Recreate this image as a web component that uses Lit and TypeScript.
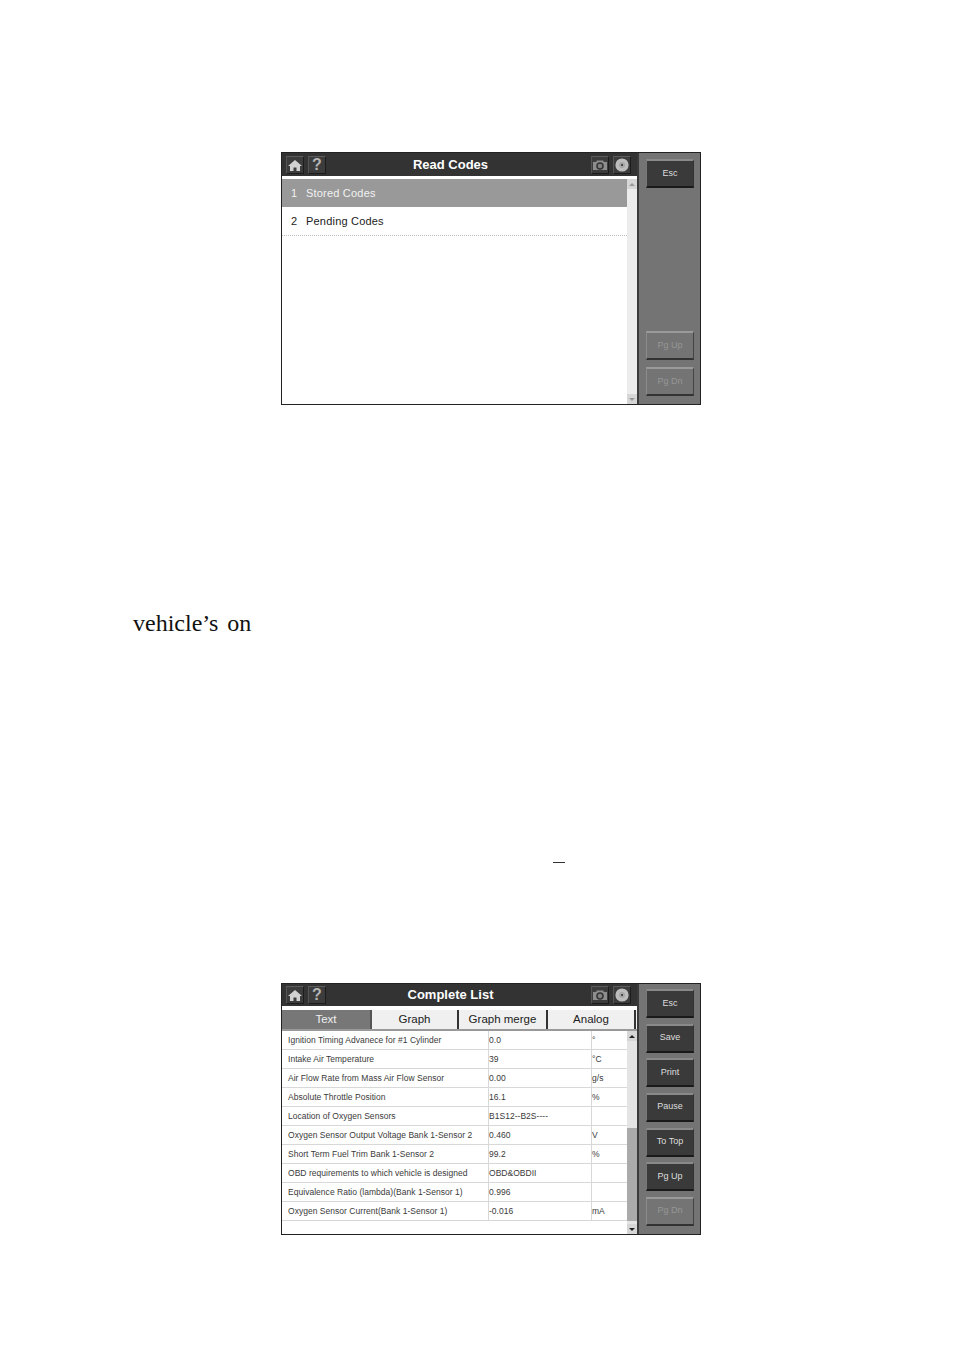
import { LitElement, html, css, svg } from "lit";
import { customElement, property } from "lit/decorators.js";

const home = svg`<svg viewBox="0 0 18 18" width="18" height="18"><path d="M9 4 L16 10 L14 10 L14 15 L10.5 15 L10.5 11.5 L7.5 11.5 L7.5 15 L4 15 L4 10 L2 10 Z" fill="#d2d2d2"/></svg>`;
const cam = svg`<svg viewBox="0 0 18 18" width="18" height="18"><path d="M2 6 H5 L6 4.5 H12 L13 6 H16 V14 H2 Z" fill="#8d8d8d"/><circle cx="9" cy="10" r="3.8" fill="#333"/><circle cx="9" cy="10" r="2.3" fill="#808080"/></svg>`;
const disc = svg`<svg viewBox="0 0 18 18" width="18" height="18"><circle cx="9" cy="9" r="6.6" fill="#bdbdbd"/><circle cx="9" cy="9" r="3" fill="#a6a6a6"/><circle cx="9" cy="9" r="1" fill="#2e2e2e"/></svg>`;

@customElement("hu-head")
class HuHead extends LitElement {
  @property() label = "";
  static styles = css`
    :host { display: flex; align-items: center; height: 23px; background: #333; box-sizing: border-box; padding: 0 6px 0 4px; font-family: "Liberation Sans", Arial, sans-serif; }
    .ic { width: 18px; height: 18px; box-sizing: border-box; background: #3c3c3c; border: 1px solid #1c1c1c; border-top-color: #5c5c5c; border-left-color: #555; display: flex; align-items: center; justify-content: center; color: #b4b4b4; font-size: 16px; font-weight: bold; line-height: 1; }
    .ic svg { display: block; margin: -1px; }
    .pair { display: flex; gap: 4px; }
    .t { flex: 1; text-align: center; color: #fff; font-size: 13px; font-weight: bold; padding-right: 16px; padding-bottom: 1px; }
  `;
  render() {
    return html`<div class="pair"><div class="ic">${home}</div><div class="ic">?</div></div>
      <div class="t">${this.label}</div>
      <div class="pair"><div class="ic">${cam}</div><div class="ic">${disc}</div></div>`;
  }
}

@customElement("hu-btn")
class HuBtn extends LitElement {
  @property() label = "";
  @property({ type: Boolean }) off = false;
  static styles = css`
    :host { display: block; }
    div { width: 48px; height: 29px; box-sizing: border-box; padding-bottom: 2px; display: flex; align-items: center; justify-content: center; background: #3a3a3a; color: #ddd; font-family: "Liberation Sans", Arial, sans-serif; font-size: 9px; border: 1px solid #1e1e1e; border-top: 2px solid #8a8a8a; border-left-color: #777; border-right-color: #333; border-bottom: 2px solid #1a1a1a; }
    .off { background: #747474; color: #969696; border-top-color: #9a9a9a; border-left-color: #8c8c8c; border-right-color: #444; border-bottom-color: #333; }
  `;
  render() {
    return html`<div class=${this.off ? "off" : ""}>${this.label}</div>`;
  }
}

const rows: [string, string, string][] = [
  ["Ignition Timing Advanece for #1 Cylinder", "0.0", "°"],
  ["Intake Air Temperature", "39", "°C"],
  ["Air Flow Rate from Mass Air Flow Sensor", "0.00", "g/s"],
  ["Absolute Throttle Position", "16.1", "%"],
  ["Location of Oxygen Sensors", "B1S12--B2S----", ""],
  ["Oxygen Sensor Output Voltage Bank 1-Sensor 2", "0.460", "V"],
  ["Short Term Fuel Trim Bank 1-Sensor 2", "99.2", "%"],
  ["OBD requirements to which vehicle is designed", "OBD&OBDII", ""],
  ["Equivalence Ratio (lambda)(Bank 1-Sensor 1)", "0.996", ""],
  ["Oxygen Sensor Current(Bank 1-Sensor 1)", "-0.016", "mA"],
];

@customElement("app-root")
class AppRoot extends LitElement {
  static styles = css`
    :host { display: block; height: 1354px; background: #fff; overflow: hidden; font-family: "Liberation Sans", Arial, sans-serif; color: #222; }
    .page { padding-top: 152px; }
    .win { margin-left: 281px; width: 420px; height: 253px; box-sizing: border-box; border: 1px solid #222; display: flex; background: #fff; }
    .win2 { height: 252px; }
    .win2 hu-head { height: 22px; }
    .main { width: 355px; display: flex; flex-direction: column; }
    .side { flex: 1; background: #747474; border-left: 2px solid #3a3a3a; display: flex; flex-direction: column; align-items: center; padding-left: 1px; }
    .side1 { padding-top: 6px; padding-bottom: 8px; }
    .side1 .push { margin-top: auto; margin-bottom: 7px; }
    .side2 { padding-top: 5px; padding-bottom: 8px; justify-content: space-between; }
    .strip { height: 3px; background: #fff; }
    .body { flex: 1; display: flex; min-height: 0; }
    .list { flex: 1; }
    .scroll { width: 10px; background: #ececec; display: flex; flex-direction: column; justify-content: space-between; }
    .sb { height: 10px; background: #d6d6d6; display: flex; align-items: center; justify-content: center; }
    .tri-u { width: 0; height: 0; border: 3px solid transparent; border-top: 0; border-bottom: 3px solid #999; }
    .tri-d { width: 0; height: 0; border: 3px solid transparent; border-bottom: 0; border-top: 3px solid #999; }
    .dark .tri-u { border-bottom-color: #222; }
    .dark .tri-d { border-top-color: #222; }
    .item { height: 28px; display: flex; align-items: center; font-size: 11px; letter-spacing: 0.2px; padding-left: 9px; padding-bottom: 1px; box-sizing: border-box; color: #222; }
    .item span:first-child { width: 15px; }
    .item.sel { background: #999; color: #f2f2f2; }
    .item.line { height: 29px; border-bottom: 1px dotted #bbb; }

    .tabs { display: flex; height: 19px; margin-top: 4px; background: #f0f0f0; border-bottom: 2px solid #999; font-size: 11.5px; }
    .tab { width: 87px; display: flex; align-items: center; justify-content: center; box-sizing: border-box; padding-bottom: 2px; border-right: 2px solid #333; color: #222; }
    .tab.on { width: 90px; background: #777; color: #f0f0f0; border-right-color: #555; }
    .tab.w88 { width: 88px; }
    .tab.w89 { width: 89px; }
    .tbl { flex: 1; }
    .r { display: grid; grid-template-columns: 206px 103px 1fr; height: 19px; border-bottom: 1px solid #d8d8d8; box-sizing: border-box; font-size: 8.5px; letter-spacing: 0.03px; align-items: stretch; color: #3a3a3a; }
    .r div { display: flex; align-items: center; white-space: nowrap; padding-bottom: 1px; }
    .r div:first-child { padding-left: 6px; }
    .r div + div { border-left: 1px solid #d8d8d8; }
    .sc2 { background: #e4e4e4; justify-content: flex-start; }
    .thumb { flex: 1; margin: 87px 0 3px; background: #aaa; }
    .note { margin-top: 204px; padding-left: 133px; font-family: "Liberation Serif", "Times New Roman", serif; font-size: 24px; line-height: 28px; color: #111; word-spacing: 3px; }
    .dash { margin: 225px 0 0 553px; width: 12px; height: 1px; background: #333; }
    .gap { height: 120px; }
  `;
  render() {
    return html`<div class="page">
      <div class="win">
        <div class="main">
          <hu-head label="Read Codes"></hu-head>
          <div class="strip"></div>
          <div class="body">
            <div class="list">
              <div class="item sel"><span>1</span><span>Stored Codes</span></div>
              <div class="item line"><span>2</span><span>Pending Codes</span></div>
            </div>
            <div class="scroll">
              <div class="sb"><i class="tri-u"></i></div>
              <div class="sb"><i class="tri-d"></i></div>
            </div>
          </div>
        </div>
        <div class="side side1">
          <hu-btn label="Esc"></hu-btn>
          <hu-btn class="push" label="Pg Up" off></hu-btn>
          <hu-btn label="Pg Dn" off></hu-btn>
        </div>
      </div>
      <div class="note">vehicle’s on</div>
      <div class="dash"></div>
      <div class="gap"></div>
      <div class="win win2">
        <div class="main">
          <hu-head label="Complete List"></hu-head>
          <div class="tabs">
            <div class="tab on">Text</div>
            <div class="tab">Graph</div>
            <div class="tab w89">Graph merge</div>
            <div class="tab w88">Analog</div>
          </div>
          <div class="body">
            <div class="tbl">
              ${rows.map((r) => html`<div class="r"><div>${r[0]}</div><div>${r[1]}</div><div>${r[2]}</div></div>`)}
            </div>
            <div class="scroll sc2 dark">
              <div class="sb"><i class="tri-u"></i></div>
              <div class="thumb"></div>
              <div class="sb"><i class="tri-d"></i></div>
            </div>
          </div>
        </div>
        <div class="side side2">
          <hu-btn label="Esc"></hu-btn>
          <hu-btn label="Save"></hu-btn>
          <hu-btn label="Print"></hu-btn>
          <hu-btn label="Pause"></hu-btn>
          <hu-btn label="To Top"></hu-btn>
          <hu-btn label="Pg Up"></hu-btn>
          <hu-btn label="Pg Dn" off></hu-btn>
        </div>
      </div>
    </div>`;
  }
}
